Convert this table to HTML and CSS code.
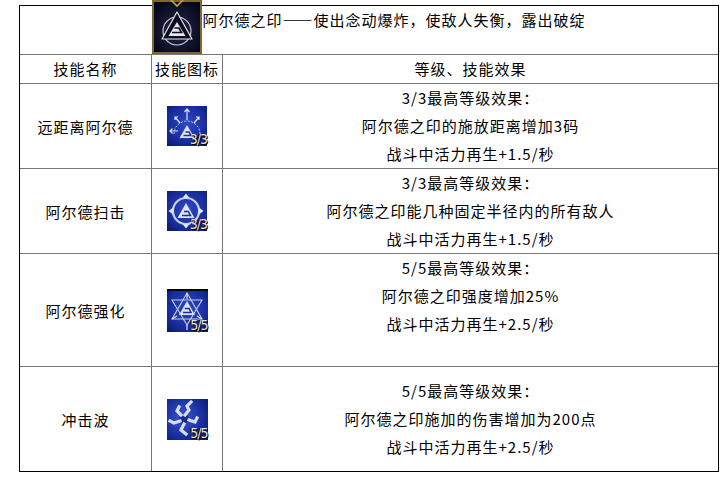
FILE: index.html
```html
<!DOCTYPE html>
<html lang="zh-CN">
<head>
<meta charset="utf-8">
<title>阿尔德之印</title>
<link rel="stylesheet" href="styles.css">
</head>
<body>
<svg class="defs" width="0" height="0" aria-hidden="true">
  <defs>
    <radialGradient id="blue" cx="50%" cy="45%" r="70%">
      <stop offset="0" stop-color="#2e49c4"/>
      <stop offset="0.6" stop-color="#1a2fa2"/>
      <stop offset="1" stop-color="#0d1a72"/>
    </radialGradient>
    <radialGradient id="wave" cx="40%" cy="45%" r="70%">
      <stop offset="0" stop-color="#3a58cc"/>
      <stop offset="0.55" stop-color="#1f36a8"/>
      <stop offset="1" stop-color="#0f1c78"/>
    </radialGradient>
    <radialGradient id="night" cx="50%" cy="55%" r="65%">
      <stop offset="0" stop-color="#22264a"/>
      <stop offset="1" stop-color="#06071a"/>
    </radialGradient>
  </defs>
</svg>
<div class="sheet">
  <div class="title">
    <svg class="crest" viewBox="0 0 50 54" width="50" height="54">
      <rect width="50" height="54" fill="#7b6a2c"/>
      <rect x="2" y="2" width="46" height="50" fill="url(#night)"/>
      <path d="M19 0 L25 6 L31 0" stroke="#c2a44c" stroke-width="1.6" fill="none"/>
      <circle cx="25" cy="31" r="14" stroke="#d9d9d9" stroke-width="1.1" fill="none"/>
      <path d="M25 12 L10 39 L40 39 Z" stroke="#e6e6e6" stroke-width="1.2" fill="#0b0d24" stroke-linejoin="round"/>
      <path d="M25 22 L16.5 36 L33.5 36 Z" fill="#e8e8ea"/>
      <path d="M20 32.5 H29.5 L27 28 H22.5" stroke="#0b0d24" stroke-width="1.7" fill="none"/>
    </svg>
    <span class="title-text">阿尔德之印——使出念动爆炸，使敌人失衡，露出破绽</span>
  </div>

  <div class="cell head">技能名称</div>
  <div class="cell head col">技能图标</div>
  <div class="cell head col">等级、技能效果</div>

  <div class="cell name">远距离阿尔德</div>
  <div class="cell col">
    <div class="badge">
      <svg class="icon" viewBox="0 0 40 40" width="40" height="40">
        <rect width="40" height="40" fill="url(#blue)"/>
        <path d="M7 28 A13 13 0 0 1 33 28" stroke="#cfd6ea" stroke-width="1" stroke-dasharray="2 1.5" fill="none"/>
        <path d="M20 14 V3 M17.5 6 L20 3 L22.5 6" stroke="#dfe4f2" stroke-width="1.2" fill="none"/>
        <path d="M13 17 L8 11 M8 14 L8 11 L11 11" stroke="#dfe4f2" stroke-width="1.2" fill="none"/>
        <path d="M27 17 L32 11 M29 11 L32 11 L32 14" stroke="#dfe4f2" stroke-width="1.2" fill="none"/>
        <path d="M11 25 H3 M5.5 22.5 L3 25 L5.5 27.5" stroke="#dfe4f2" stroke-width="1.2" fill="none"/>
        <path d="M20 19 L12.5 32 L27.5 32 Z" fill="#dde2ef"/>
        <path d="M16.5 29.5 H24 L22 26 H18.5" stroke="#1a2fa2" stroke-width="1.5" fill="none"/>
      </svg>
      <span class="lvl">3/3</span>
    </div>
  </div>
  <div class="cell fx col"><p>3/3最高等级效果：</p><p>阿尔德之印的施放距离增加3码</p><p>战斗中活力再生+1.5/秒</p></div>

  <div class="cell name">阿尔德扫击</div>
  <div class="cell col">
    <div class="badge">
      <svg class="icon" viewBox="0 0 40 40" width="40" height="40">
        <rect width="40" height="40" fill="url(#blue)"/>
        <circle cx="19" cy="20" r="13" stroke="#c9cfe0" stroke-width="2.2" fill="none"/>
        <path d="M15.5 7 L19 2.5 L22.5 7 Z M32 16.5 L36.5 20 L32 23.5 Z M22.5 33 L19 37.5 L15.5 33 Z M6 23.5 L1.5 20 L6 16.5 Z" fill="#dfe4f2"/>
        <path d="M19 12 L10.5 27 L27.5 27 Z" fill="#dde2ef"/>
        <path d="M15 24.5 H23.5 L21.3 20.5 H17" stroke="#1a2fa2" stroke-width="1.5" fill="none"/>
      </svg>
      <span class="lvl">3/3</span>
    </div>
  </div>
  <div class="cell fx col"><p>3/3最高等级效果：</p><p>阿尔德之印能几种固定半径内的所有敌人</p><p>战斗中活力再生+1.5/秒</p></div>

  <div class="cell name">阿尔德强化</div>
  <div class="cell col">
    <div class="badge">
      <svg class="icon" viewBox="0 0 41 43" width="41" height="43">
        <rect width="41" height="43" fill="url(#blue)"/>
        <rect width="41" height="2" fill="#05060f"/>
        <path d="M20 4 L35 30 L5 30 Z M20 36 L5 11 L35 11 Z" stroke="#c8cee0" stroke-width="1.1" fill="none"/>
        <path d="M20 4 V10 M5 30 L10 27 M35 30 L30 27 M20 36 V41" stroke="#dfe4f2" stroke-width="1.2"/>
        <path d="M20 12 L12 26 L28 26 Z" fill="#dde2ef"/>
        <path d="M16 23.5 H24 L22 19.5 H17.8" stroke="#1a2fa2" stroke-width="1.5" fill="none"/>
      </svg>
      <span class="lvl">5/5</span>
    </div>
  </div>
  <div class="cell fx col"><p>5/5最高等级效果：</p><p>阿尔德之印强度增加25%</p><p>战斗中活力再生+2.5/秒</p><p class="blank"></p></div>

  <div class="cell name">冲击波</div>
  <div class="cell col">
    <div class="badge">
      <svg class="icon" viewBox="0 0 41 41" width="41" height="41">
        <rect width="41" height="41" fill="url(#wave)"/>
        <circle cx="17" cy="20" r="5" fill="#132a90"/>
        <g stroke="#d8dcea" stroke-width="3.2" fill="none" stroke-linejoin="miter" stroke-linecap="square">
          <path d="M18 16 L22 11 L20 7 L24 3"/>
          <path d="M14 16 L10 12 L12 8"/>
          <path d="M13 22 L7 24 L3 22"/>
          <path d="M17 25 L14 31 L19 35"/>
          <path d="M22 21 L28 23 L30 19"/>
        </g>
      </svg>
      <span class="lvl">5/5</span>
    </div>
  </div>
  <div class="cell fx col"><p>5/5最高等级效果：</p><p>阿尔德之印施加的伤害增加为200点</p><p>战斗中活力再生+2.5/秒</p></div>
</div>
</body>
</html>
```

FILE: styles.css
```css
html, body {
  margin: 0;
  padding: 0;
  background: #fff;
}

body {
  font-family: "Noto Sans CJK SC", "Liberation Sans", sans-serif;
  font-size: 15px;
  letter-spacing: 1px;
  color: #000;
}

.defs {
  position: absolute;
  width: 0;
  height: 0;
}

.sheet {
  box-sizing: border-box;
  width: 700px;
  margin: 5px 0 0 19px;
  border: 1px solid #000;
  display: grid;
  grid-template-columns: 131px 71px 496px;
  grid-template-rows: 48px 29px 85px 85px 113px 105px;
}

.title {
  grid-column: 1 / 4;
  display: flex;
  justify-content: center;
  align-items: flex-start;
}

.crest {
  display: block;
  margin-top: -6px;
  flex: none;
}

.title-text {
  line-height: 28px;
  white-space: nowrap;
}

.cell {
  box-sizing: border-box;
  border-top: 1px solid #777;
  display: flex;
  align-items: center;
  justify-content: center;
  text-align: center;
  white-space: nowrap;
}

.col {
  border-left: 1px solid #777;
}

.head {
  line-height: 28px;
}

.fx {
  flex-direction: column;
  line-height: 28px;
}

.fx p {
  margin: 0;
  height: 28px;
}

.badge {
  position: relative;
}

.icon {
  display: block;
}

.lvl {
  position: absolute;
  right: 0;
  bottom: 1px;
  font-family: "Liberation Sans Narrow", "DejaVu Sans Condensed", sans-serif;
  font-size: 14px;
  line-height: 12px;
  letter-spacing: -1px;
  color: #e6e6e6;
  text-shadow: 1px 1px 0 #000, -1px 0 0 #000;
}
```
